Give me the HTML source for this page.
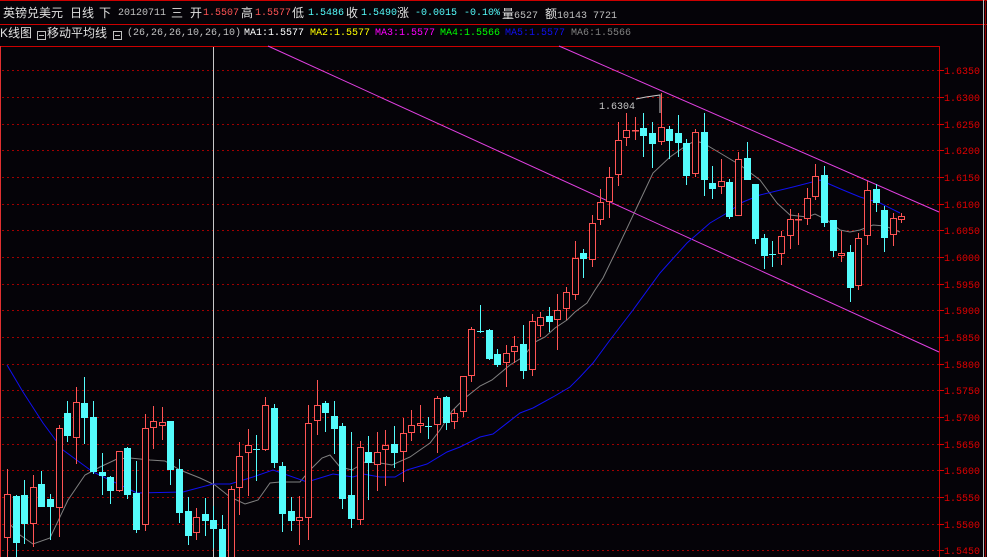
<!DOCTYPE html>
<html><head><meta charset="utf-8"><style>
html,body{margin:0;padding:0;background:#050308;width:987px;height:557px;overflow:hidden}
.t{position:absolute;font-family:"Liberation Mono","Noto Sans CJK SC",monospace;font-size:10px;line-height:12px;white-space:nowrap;color:#c0c0c0}
.c{font-family:"Liberation Sans","Noto Sans CJK SC",sans-serif;font-size:12px}
svg{position:absolute;left:0;top:0}
</style></head><body>
<svg width="987" height="557" viewBox="0 0 987 557" shape-rendering="crispEdges">
<rect width="987" height="557" fill="#050308"/>
<line x1="0" y1="0.5" x2="987" y2="0.5" stroke="#c00"/>
<line x1="0" y1="24.5" x2="987" y2="24.5" stroke="#c00"/>
<line x1="0" y1="46.5" x2="939" y2="46.5" stroke="#c00"/>
<line x1="0.5" y1="46" x2="0.5" y2="557" stroke="#e03030"/>
<line x1="939.5" y1="46" x2="939.5" y2="557" stroke="#c00"/>
<line x1="983.5" y1="0" x2="983.5" y2="557" stroke="#bbb"/>
<line x1="985.5" y1="0" x2="985.5" y2="557" stroke="#900"/>
<g stroke="#a00000" stroke-dasharray="2 3">
<path d="M2 70.5H939M2 97.5H939M2 124.5H939M2 150.5H939M2 177.5H939M2 204.5H939M2 230.5H939M2 257.5H939M2 284.5H939M2 310.5H939M2 337.5H939M2 364.5H939M2 390.5H939M2 417.5H939M2 444.5H939M2 470.5H939M2 497.5H939M2 524.5H939M2 550.5H939"/>
</g>
<path stroke="#d00" d="M939 70.5h5M939 97.5h5M939 124.5h5M939 150.5h5M939 177.5h5M939 204.5h5M939 230.5h5M939 257.5h5M939 284.5h5M939 310.5h5M939 337.5h5M939 364.5h5M939 390.5h5M939 417.5h5M939 444.5h5M939 470.5h5M939 497.5h5M939 524.5h5M939 550.5h5"/>
<g font-family="Liberation Mono,monospace" font-size="10" fill="#e00000">
<text x="944" y="74">1.6350</text><text x="944" y="101">1.6300</text><text x="944" y="128">1.6250</text><text x="944" y="154">1.6200</text><text x="944" y="181">1.6150</text><text x="944" y="208">1.6100</text><text x="944" y="234">1.6050</text><text x="944" y="261">1.6000</text><text x="944" y="288">1.5950</text><text x="944" y="314">1.5900</text><text x="944" y="341">1.5850</text><text x="944" y="368">1.5800</text><text x="944" y="394">1.5750</text><text x="944" y="421">1.5700</text><text x="944" y="448">1.5650</text><text x="944" y="474">1.5600</text><text x="944" y="501">1.5550</text><text x="944" y="528">1.5500</text><text x="944" y="554">1.5450</text>
</g>
<line x1="213.5" y1="47" x2="213.5" y2="557" stroke="#c8c8c8"/>
<g shape-rendering="auto" fill="none">
<line x1="268" y1="46" x2="939" y2="352" stroke="#e040e0"/>
<line x1="559" y1="46" x2="939" y2="212" stroke="#e040e0"/>
<polyline stroke="#808080" points="7,521 20,535 33,544 50,538 68,500 85,475 100,467 117,459 130,458 150,460 165,461 180,470 200,478 215,485 230,497 245,504 258,500 270,483 280,482 300,482 310,470 322,458 330,455 340,467 352,470 365,462 380,463 392,465 410,457 420,450 430,443 440,430 452,411 465,398 480,386 492,380 510,365 523,357 535,342 545,337 555,328 567,320 575,312 587,303 595,290 603,278 620,243 637,207 653,173 670,157 687,145 695,141 703,143 720,153 740,165 760,180 777,203 790,215 807,217 815,214 827,220 840,230 850,232 860,230 873,225 885,226 900,232"/>
<polyline stroke="#1010f0" points="7,365 23,392 43,423 63,450 93,472 137,493 183,492 213,484 230,484 253,477 273,470 307,482 320,478 333,474 353,477 363,474 380,477 395,477 407,470 427,464 447,452 460,447 480,437 493,434 520,413 533,408 553,397 570,387 580,377 593,363 610,340 620,327 633,310 660,273 687,243 710,223 727,213 743,202 760,195 793,187 820,180 843,190 860,197 880,203 900,213"/>
<polyline stroke="#c8c8c8" points="636,99 646,97 660,95 660,113"/>
</g>
<text x="599" y="109" font-family="Liberation Mono,monospace" font-size="10" fill="#c8c8c8">1.6304</text>
<g stroke="#ff5454">
<path d="M7.5 469V557M33.5 475V547M59.5 425V537M76.5 387V464M119.5 451V492M145.5 414V531M153.5 406V449M162.5 407V440M196.5 508V540M231.5 486V560M239.5 442V515M248.5 429V496M265.5 397V451M299.5 496V545M308.5 405V540M317.5 380V435M360.5 441V525M377.5 432V491M385.5 430V486M403.5 418V482M411.5 410V441M420.5 405V433M437.5 396V453M454.5 409V429M463.5 376V417M471.5 327V382M506.5 345V387M514.5 336V363M532.5 314V376M540.5 312V337M557.5 294V350M566.5 287V320M575.5 241V300M592.5 215V267M600.5 189V225M609.5 167V218M618.5 122V186M626.5 113V146M635.5 117V140M661.5 93V145M695.5 129V177M721.5 159V194M738.5 152V215M781.5 231V265M790.5 209V249M798.5 213V245M807.5 188V225M815.5 164V200M841.5 231V262M858.5 233V290M867.5 181V245M893.5 213V246M901.5 213V223"/>
<g fill="#050308">
<rect x="4.5" y="494.5" width="6" height="43"/><rect x="30.5" y="487.5" width="6" height="36"/><rect x="56.5" y="428.5" width="6" height="79"/><rect x="73.5" y="402.5" width="6" height="35"/><rect x="116.5" y="451.5" width="6" height="39"/><rect x="142.5" y="428.5" width="6" height="96"/><rect x="150.5" y="421.5" width="6" height="6"/><rect x="159.5" y="422.5" width="6" height="3"/><rect x="193.5" y="517.5" width="6" height="15"/><rect x="228.5" y="489.5" width="6" height="70"/><rect x="236.5" y="456.5" width="6" height="31"/><rect x="245.5" y="445.5" width="6" height="7"/><rect x="262.5" y="405.5" width="6" height="44"/><rect x="296.5" y="517.5" width="6" height="3"/><rect x="305.5" y="423.5" width="6" height="94"/><rect x="314.5" y="405.5" width="6" height="15"/><rect x="357.5" y="447.5" width="6" height="72"/><rect x="374.5" y="452.5" width="6" height="12"/><rect x="382.5" y="445.5" width="6" height="4"/><rect x="400.5" y="433.5" width="6" height="18"/><rect x="408.5" y="425.5" width="6" height="7"/><rect x="417.5" y="423.5" width="6" height="2"/><rect x="434.5" y="398.5" width="6" height="26"/><rect x="451.5" y="413.5" width="6" height="8"/><rect x="460.5" y="376.5" width="6" height="35"/><rect x="468.5" y="329.5" width="6" height="46"/><rect x="503.5" y="353.5" width="6" height="9"/><rect x="511.5" y="346.5" width="6" height="5"/><rect x="529.5" y="321.5" width="6" height="48"/><rect x="537.5" y="317.5" width="6" height="8"/><rect x="554.5" y="310.5" width="6" height="9"/><rect x="563.5" y="292.5" width="6" height="16"/><rect x="572.5" y="258.5" width="6" height="36"/><rect x="589.5" y="223.5" width="6" height="36"/><rect x="597.5" y="202.5" width="6" height="17"/><rect x="606.5" y="177.5" width="6" height="24"/><rect x="615.5" y="140.5" width="6" height="34"/><rect x="623.5" y="130.5" width="6" height="7"/><rect x="632.5" y="130.5" width="6" height="0.5"/><rect x="658.5" y="127.5" width="6" height="14"/><rect x="692.5" y="132.5" width="6" height="41"/><rect x="718.5" y="181.5" width="6" height="5"/><rect x="735.5" y="159.5" width="6" height="56"/><rect x="778.5" y="236.5" width="6" height="17"/><rect x="787.5" y="219.5" width="6" height="16"/><rect x="795.5" y="219.5" width="6" height="0.5"/><rect x="804.5" y="198.5" width="6" height="20"/><rect x="812.5" y="176.5" width="6" height="20"/><rect x="838.5" y="253.5" width="6" height="2"/><rect x="855.5" y="238.5" width="6" height="47"/><rect x="864.5" y="190.5" width="6" height="45"/><rect x="890.5" y="218.5" width="6" height="16"/><rect x="898.5" y="216.5" width="6" height="3"/>
</g></g>
<g stroke="#54fcfc" fill="#54fcfc">
<path fill="none" d="M16.5 495V557M24.5 480V544M41.5 471V507M50.5 494V540M67.5 401V442M84.5 377V444M93.5 401V474M102.5 453V495M110.5 476V504M127.5 447V499M136.5 461V533M170.5 421V485M179.5 459V523M188.5 497V545M205.5 498V536M213.5 506V548M222.5 515V560M256.5 435V481M274.5 404V468M282.5 462V532M291.5 497V531M325.5 401V432M334.5 401V454M342.5 423V509M351.5 432V528M368.5 436V500M394.5 426V468M428.5 417V439M446.5 396V430M480.5 305V333M489.5 329V360M497.5 349V367M523.5 325V379M549.5 307V332M583.5 249V278M643.5 113V157M652.5 122V168M669.5 126V159M678.5 115V157M686.5 139V185M704.5 113V196M712.5 166V199M729.5 179V219M747.5 142V180M755.5 184V244M764.5 234V269M772.5 241V267M824.5 166V227M833.5 220V257M850.5 245V302M876.5 184V212M884.5 206V252"/>
<g stroke="none">
<rect x="13" y="496" width="7" height="47"/><rect x="21" y="495" width="7" height="29"/><rect x="38" y="484" width="7" height="23"/><rect x="47" y="499" width="7" height="8"/><rect x="64" y="413" width="7" height="23"/><rect x="81" y="403" width="7" height="15"/><rect x="90" y="417" width="7" height="55"/><rect x="99" y="472" width="7" height="4"/><rect x="107" y="477" width="7" height="14"/><rect x="124" y="448" width="7" height="47"/><rect x="133" y="493" width="7" height="37"/><rect x="167" y="421" width="7" height="49"/><rect x="176" y="469" width="7" height="44"/><rect x="185" y="511" width="7" height="25"/><rect x="202" y="514" width="7" height="7"/><rect x="210" y="520" width="7" height="9"/><rect x="219" y="529" width="7" height="31"/><rect x="253" y="449" width="7" height="1"/><rect x="271" y="408" width="7" height="55"/><rect x="279" y="466" width="7" height="48"/><rect x="288" y="511" width="7" height="10"/><rect x="322" y="403" width="7" height="10"/><rect x="331" y="416" width="7" height="13"/><rect x="339" y="426" width="7" height="73"/><rect x="348" y="495" width="7" height="24"/><rect x="365" y="452" width="7" height="11"/><rect x="391" y="444" width="7" height="9"/><rect x="425" y="426" width="7" height="1"/><rect x="443" y="397" width="7" height="26"/><rect x="477" y="331" width="7" height="1"/><rect x="486" y="330" width="7" height="29"/><rect x="494" y="354" width="7" height="11"/><rect x="520" y="344" width="7" height="27"/><rect x="546" y="316" width="7" height="6"/><rect x="580" y="253" width="7" height="6"/><rect x="640" y="128" width="7" height="8"/><rect x="649" y="133" width="7" height="11"/><rect x="666" y="129" width="7" height="12"/><rect x="675" y="133" width="7" height="10"/><rect x="683" y="143" width="7" height="33"/><rect x="701" y="132" width="7" height="48"/><rect x="709" y="183" width="7" height="6"/><rect x="726" y="182" width="7" height="35"/><rect x="744" y="158" width="7" height="22"/><rect x="752" y="184" width="7" height="55"/><rect x="761" y="238" width="7" height="18"/><rect x="769" y="254" width="7" height="1"/><rect x="821" y="175" width="7" height="48"/><rect x="830" y="220" width="7" height="31"/><rect x="847" y="252" width="7" height="36"/><rect x="873" y="189" width="7" height="14"/><rect x="881" y="210" width="7" height="28"/>
</g></g>
</svg>
<div class="t c" style="left:3px;top:7px;color:#e0e0e0">英镑兑美元</div>
<div class="t c" style="left:70px;top:7px;color:#e0e0e0">日线</div>
<div class="t c" style="left:99px;top:7px;color:#e0e0e0">下</div>
<div class="t" style="left:118px;top:8px">20120711</div>
<div class="t c" style="left:171px;top:7px;color:#e0e0e0">三</div>
<div class="t c" style="left:190px;top:7px;color:#e0e0e0">开</div>
<div class="t" style="left:203px;top:8px;color:#ff5454">1.5507</div>
<div class="t c" style="left:241px;top:7px;color:#e0e0e0">高</div>
<div class="t" style="left:255px;top:8px;color:#ff5454">1.5577</div>
<div class="t c" style="left:292px;top:7px;color:#e0e0e0">低</div>
<div class="t" style="left:308px;top:8px;color:#54fcfc">1.5486</div>
<div class="t c" style="left:346px;top:7px;color:#e0e0e0">收</div>
<div class="t" style="left:361px;top:8px;color:#54fcfc">1.5490</div>
<div class="t c" style="left:397px;top:7px;color:#e0e0e0">涨</div>
<div class="t" style="left:415px;top:8px;color:#54fcfc">-0.0015</div>
<div class="t" style="left:464px;top:8px;color:#54fcfc">-0.10%</div>
<div class="t" style="left:502px;top:8px"><span class="c" style="color:#e0e0e0">量</span>6527</div>
<div class="t" style="left:545px;top:8px"><span class="c" style="color:#e0e0e0">额</span>10143 7721</div>
<div class="t c" style="left:0px;top:27px;color:#e0e0e0">K线图</div>
<div style="position:absolute;left:37px;top:31px;width:7px;height:7px;border:1px solid #c0c0c0"><div style="position:absolute;left:1px;top:3px;width:5px;height:1px;background:#c0c0c0"></div></div>
<div class="t c" style="left:47px;top:27px;color:#e0e0e0">移动平均线</div>
<div style="position:absolute;left:113px;top:31px;width:7px;height:7px;border:1px solid #c0c0c0"><div style="position:absolute;left:1px;top:3px;width:5px;height:1px;background:#c0c0c0"></div></div>
<div class="t" style="left:127px;top:28px">(26,26,26,10,26,10)</div>
<div class="t" style="left:244px;top:28px;color:#fff">MA1:1.5577</div>
<div class="t" style="left:310px;top:28px;color:#ffff00">MA2:1.5577</div>
<div class="t" style="left:375px;top:28px;color:#ff00ff">MA3:1.5577</div>
<div class="t" style="left:440px;top:28px;color:#00ff00">MA4:1.5566</div>
<div class="t" style="left:505px;top:28px;color:#1010f0">MA5:1.5577</div>
<div class="t" style="left:571px;top:28px;color:#808080">MA6:1.5566</div>
</body></html>
